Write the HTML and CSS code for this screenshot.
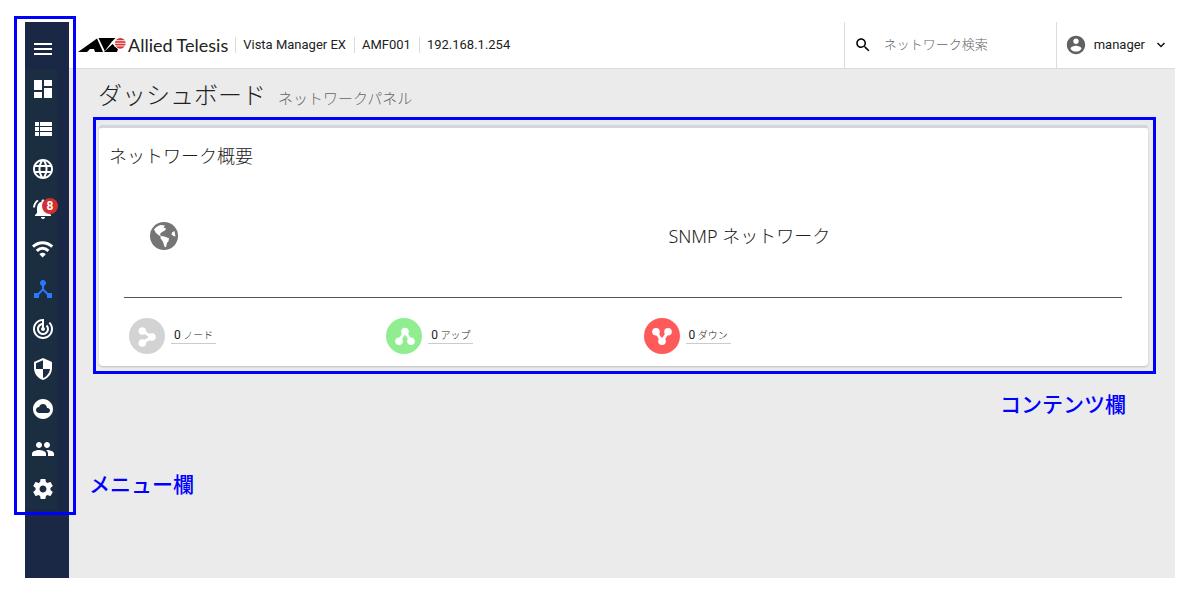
FILE: index.html
```html
<!DOCTYPE html>
<html lang="ja">
<head>
<meta charset="utf-8">
<title>Vista Manager EX</title>
<link rel="stylesheet" href="styles.css">
</head>
<body>
<div class="app">
  <nav class="sidebar" aria-label="メニュー">
    <div class="menu">
      <button class="menu-item" aria-label="メニュー"><svg class="icon" viewBox="0 0 24 24"><path d="M3 18h18v-2H3v2zm0-5h18v-2H3v2zm0-7v2h18V6H3z"/></svg></button>
      <div class="menu-links">
        <a class="menu-item" href="#" aria-label="ダッシュボード"><svg class="icon" viewBox="0 0 24 24"><path d="M3 13h8V3H3v10zm0 8h8v-6H3v6zm10 0h8V11h-8v10zm0-18v6h8V3h-8z"/></svg></a>
        <a class="menu-item" href="#" aria-label="リスト"><svg class="icon" viewBox="0 0 24 24"><path d="M4 14h4v-4H4v4zm0 5h4v-4H4v4zM4 9h4V5H4v4zm5 5h12v-4H9v4zm0 5h12v-4H9v4zM9 5v4h12V5H9z"/></svg></a>
        <a class="menu-item" href="#" aria-label="マップ"><svg class="icon" viewBox="0 0 24 24"><path d="M11.99 2C6.47 2 2 6.48 2 12s4.47 10 9.99 10C17.52 22 22 17.52 22 12S17.52 2 11.99 2zm6.93 6h-2.95c-.32-1.25-.78-2.45-1.38-3.56 1.84.63 3.37 1.91 4.33 3.56zM12 4.04c.83 1.2 1.48 2.53 1.91 3.96h-3.82c.43-1.43 1.08-2.76 1.91-3.96zM4.26 14C4.1 13.36 4 12.69 4 12s.1-1.36.26-2h3.38c-.08.66-.14 1.32-.14 2s.06 1.34.14 2H4.26zm.82 2h2.95c.32 1.25.78 2.45 1.38 3.56-1.84-.63-3.37-1.9-4.33-3.56zm2.95-8H5.08c.96-1.66 2.49-2.93 4.33-3.56C8.81 5.55 8.35 6.75 8.03 8zM12 19.96c-.83-1.2-1.48-2.53-1.91-3.96h3.82c-.43 1.43-1.08 2.76-1.91 3.96zM14.34 14H9.66c-.09-.66-.16-1.32-.16-2s.07-1.35.16-2h4.68c.09.65.16 1.32.16 2s-.07 1.34-.16 2zm.25 5.56c.6-1.11 1.06-2.31 1.38-3.56h2.95c-.96 1.65-2.49 2.93-4.33 3.56zM16.36 14c.08-.66.14-1.32.14-2s-.06-1.34-.14-2h3.38c.16.64.26 1.31.26 2s-.1 1.36-.26 2h-3.38z"/></svg></a>
        <a class="menu-item" href="#" aria-label="通知"><svg class="icon" viewBox="0 0 24 24"><path d="M7.58 4.08L6.15 2.65C3.75 4.48 2.17 7.3 2.03 10.5h2c.15-2.65 1.51-4.97 3.55-6.42zm12.39 6.42h2c-.15-3.2-1.73-6.02-4.12-7.85l-1.42 1.43c2.02 1.45 3.39 3.77 3.54 6.42zM18 11c0-3.07-1.64-5.64-4.5-6.32V4c0-.83-.67-1.5-1.5-1.5s-1.5.67-1.5 1.5v.68C7.63 5.36 6 7.92 6 11v5l-2 2v1h16v-1l-2-2v-5zm-6 11c.14 0 .27-.01.4-.04.65-.14 1.18-.58 1.44-1.18.1-.24.15-.5.15-.78h-4c.01 1.1.9 2 2.01 2z"/></svg><span class="badge">8</span></a>
        <a class="menu-item" href="#" aria-label="ワイヤレス"><svg class="icon" viewBox="0 0 24 24"><g fill="none" stroke="currentColor" stroke-width="3"><path d="M2 9.600C7.600 4.300 15.600 4.300 21.200 9.600"/><path d="M5.800 13.800C9.400 10.400 13.800 10.400 17.400 13.800"/></g><path d="M8.400 17.200Q11.600 14.400 14.800 17.200L11.600 20.500z"/></svg></a>
        <a class="menu-item active" href="#" aria-label="ネットワーク"><svg class="icon" viewBox="0 0 24 24"><path d="M17 16l-4-4V8.820C14.160 8.400 15 7.300 15 6c0-1.660-1.340-3-3-3S9 4.340 9 6c0 1.300.84 2.400 2 2.820V12l-4 4H3v5h5v-3.050l4-4.200 4 4.200V21h5v-5h-4z"/></svg></a>
        <a class="menu-item" href="#" aria-label="トラッキング"><svg class="icon" viewBox="0 0 24 24"><path d="M19.070 4.930l-1.410 1.410C19.100 7.790 20 9.790 20 12c0 4.420-3.580 8-8 8s-8-3.580-8-8c0-4.080 3.050-7.440 7-7.930v2.020C8.160 6.570 6 9.030 6 12c0 3.310 2.690 6 6 6s6-2.690 6-6c0-1.660-.67-3.160-1.760-4.240l-1.410 1.410C15.550 9.900 16 10.900 16 12c0 2.210-1.790 4-4 4s-4-1.790-4-4c0-1.860 1.280-3.410 3-3.860v2.140c-.6.350-1 .98-1 1.720 0 1.100.9 2 2 2s2-.9 2-2c0-.74-.4-1.380-1-1.720V2h-1C6.480 2 2 6.480 2 12s4.480 10 10 10 10-4.480 10-10c0-2.760-1.120-5.260-2.930-7.070z"/></svg></a>
        <a class="menu-item" href="#" aria-label="セキュリティ"><svg class="icon" viewBox="0 0 24 24"><path d="M12 1L3 5v6c0 5.550 3.840 10.740 9 12 5.160-1.260 9-6.450 9-12V5l-9-4zm0 10.990h7c-.53 4.120-3.280 7.790-7 8.940V12H5V6.300l7-3.110v8.800z"/></svg></a>
        <a class="menu-item" href="#" aria-label="クラウド"><svg class="icon" viewBox="0 0 24 24"><path d="M12 2C6.480 2 2 6.480 2 12s4.480 10 10 10 10-4.480 10-10S17.520 2 12 2zm4.500 14H8c-1.660 0-3-1.340-3-3s1.340-3 3-3l.14.010C8.580 8.280 10.130 7 12 7c2.210 0 4 1.790 4 4h.5c1.380 0 2.500 1.120 2.500 2.500S17.880 16 16.500 16z"/></svg></a>
        <a class="menu-item" href="#" aria-label="ユーザー"><svg class="icon" viewBox="0 0 24 24"><path d="M16 11c1.660 0 2.990-1.340 2.990-3S17.660 5 16 5c-1.660 0-3 1.340-3 3s1.340 3 3 3zm-8 0c1.660 0 2.990-1.340 2.990-3S9.660 5 8 5C6.340 5 5 6.340 5 8s1.340 3 3 3zm0 2c-2.330 0-7 1.170-7 3.500V19h14v-2.500c0-2.330-4.670-3.500-7-3.500zm8 0c-.29 0-.62.020-.97.050 1.160.84 1.970 1.970 1.970 3.450V19h6v-2.500c0-2.330-4.670-3.500-7-3.500z"/></svg></a>
        <a class="menu-item" href="#" aria-label="設定"><svg class="icon" viewBox="0 0 24 24"><path d="M19.43 12.98c.04-.32.07-.64.07-.98s-.03-.66-.07-.98l2.11-1.65c.19-.15.24-.42.12-.64l-2-3.46c-.12-.22-.39-.3-.61-.22l-2.49 1c-.52-.4-1.08-.73-1.69-.98l-.38-2.65C14.46 2.18 14.25 2 14 2h-4c-.25 0-.46.18-.49.42l-.38 2.65c-.61.25-1.17.59-1.69.98l-2.49-1c-.23-.09-.49 0-.61.22l-2 3.46c-.13.22-.07.49.12.64l2.11 1.65c-.04.32-.07.65-.07.98s.03.66.07.98l-2.11 1.65c-.19.15-.24.42-.12.64l2 3.46c.12.22.39.3.61.22l2.49-1c.52.4 1.08.73 1.69.98l.38 2.65c.03.24.24.42.49.42h4c.25 0 .46-.18.49-.42l.38-2.65c.61-.25 1.17-.59 1.69-.98l2.49 1c.23.09.49 0 .61-.22l2-3.46c.12-.22.07-.49-.12-.64l-2.11-1.65zM12 15.5c-1.93 0-3.5-1.57-3.5-3.5s1.57-3.5 3.5-3.5 3.5 1.57 3.5 3.5-1.57 3.5-3.5 3.5z"/></svg></a>
      </div>
      <div class="menu-frame"></div>
    </div>
  </nav>
  <div class="main">
    <header class="topbar">
      <div class="brand">
        <svg class="mark" viewBox="0 0 48 16"><path d="M0 15L19 1.500 25 15h-8l-1-3h-4L9 15zM20.500 1H37.500L34 4.500 26.800 14zM26 15L34.500 7 40 12 39 15z"/><circle cx="42.300" cy="6.300" r="6" fill="#fff"/><circle cx="42.300" cy="6.300" r="5.400" fill="#d5342f"/><path d="M36 3.700h12M36 6.300h12M36 8.900h12" stroke="#fff" stroke-width=".9"/></svg>
        <span class="wordmark">Allied Telesis</span>
      </div>
      <span class="crumb">Vista Manager EX</span>
      <span class="crumb">AMF001</span>
      <span class="crumb">192.168.1.254</span>
      <label class="search">
        <svg class="search-icon" viewBox="0 0 24 24"><path d="M15.500 14h-.79l-.28-.27C15.410 12.590 16 11.110 16 9.500 16 5.910 13.090 3 9.500 3S3 5.910 3 9.500 5.910 16 9.500 16c1.610 0 3.090-.59 4.230-1.570l.27.28v.79l5 4.990L20.490 19l-4.990-5zm-6 0C7.010 14 5 11.990 5 9.500S7.010 5 9.500 5 14 7.010 14 9.500 11.990 14 9.500 14z"/></svg>
        <input type="search" placeholder="ネットワーク検索" aria-label="ネットワーク検索">
      </label>
      <button class="user">
        <svg class="avatar" viewBox="0 0 24 24"><path d="M12 2C6.480 2 2 6.480 2 12s4.480 10 10 10 10-4.480 10-10S17.520 2 12 2zm0 3c1.660 0 3 1.340 3 3s-1.340 3-3 3-3-1.340-3-3 1.340-3 3-3zm0 14.200c-2.500 0-4.710-1.280-6-3.220.03-1.990 4-3.080 6-3.080 1.990 0 5.970 1.090 6 3.080-1.290 1.940-3.500 3.220-6 3.220z"/></svg>
        <span>manager</span>
        <svg class="chevron" viewBox="0 0 10 10"><path d="M1.500 3l3.500 3.500L8.500 3" fill="none" stroke="#111" stroke-width="1.500"/></svg>
      </button>
    </header>
    <main>
      <div class="heading">
        <h1>ダッシュボード</h1>
        <span class="subtitle">ネットワークパネル</span>
      </div>
      <div class="content-frame">
        <section class="card">
          <h2>ネットワーク概要</h2>
          <div class="network">
            <svg class="globe" viewBox="0 0 28 28"><circle cx="14" cy="14" r="14" fill="#757575"/><path fill="#fff" d="M4 7.500Q7 3.500 11 3l4 .500-1.500 2 2.500 1-1 2-3 1.500-2 2 1 2-2-.500-3-2.500zM10.500 14l3 .3 5.500 2-.500 3-1.500 1.500-1 4.500-1.500-.500-1.500-5-2.500-3.500zM22 10.500l2.500-1.500 1 5.500-2-.500-2-1.500z"/></svg>
            <h3>SNMP ネットワーク</h3>
          </div>
          <div class="stats">
            <div class="stat">
              <svg class="stat-icon" viewBox="0 0 36 36"><circle cx="18" cy="18" r="18" fill="#d3d3d3"/><g fill="#fff"><path d="M13.300 13L22.700 19 13.300 25" fill="none" stroke="#fff" stroke-width="3"/><circle cx="13.300" cy="13" r="3.800"/><circle cx="23" cy="19" r="3.800"/><circle cx="13.300" cy="25" r="3.800"/></g></svg>
              <a href="#"><span class="count">0</span> ノード</a>
            </div>
            <div class="stat">
              <svg class="stat-icon" viewBox="0 0 36 36"><circle cx="18" cy="18" r="18" fill="#90ee90"/><g fill="#fff"><path d="M13 23.300L19 13.500 25 23.300" fill="none" stroke="#fff" stroke-width="3"/><circle cx="13" cy="23.300" r="3.800"/><circle cx="19" cy="13.500" r="3.800"/><circle cx="25" cy="23.300" r="3.800"/></g></svg>
              <a href="#"><span class="count">0</span> アップ</a>
            </div>
            <div class="stat">
              <svg class="stat-icon" viewBox="0 0 36 36"><circle cx="18" cy="18" r="18" fill="#ff5a5a"/><g fill="#fff"><path d="M12 13.700L18 23.300 24 13.700" fill="none" stroke="#fff" stroke-width="3"/><circle cx="12" cy="13.700" r="3.800"/><circle cx="18" cy="23.300" r="3.800"/><circle cx="24" cy="13.700" r="3.800"/></g></svg>
              <a href="#"><span class="count">0</span> ダウン</a>
            </div>
          </div>
        </section>
      </div>
      <p class="note note-content">コンテンツ欄</p>
      <p class="note note-menu">メニュー欄</p>
    </main>
  </div>
</div>
</body>
</html>
```
FILE: styles.css
```css
* { box-sizing: border-box; }

body {
  margin: 0;
  padding: 22px 25px;
  background: #fff;
  color: #212121;
  font: 13px/20px Roboto, "Noto Sans CJK JP", sans-serif;
}

h1, h2, h3, p { margin: 0; }
a { color: inherit; text-decoration: none; }
button, input { font: inherit; color: inherit; border: 0; background: none; padding: 0; }

.app {
  display: flex;
  min-height: calc(100vh - 44px);
}

.sidebar {
  flex: none;
  width: 44px;
  background: #1a2846;
}

.menu {
  position: relative;
  padding-top: 7px;
  color: #fff;
}

.menu-links {
  background: linear-gradient(to right, #1a2d41 32px, transparent 32px);
}

.menu-item {
  position: relative;
  display: flex;
  align-items: center;
  justify-content: center;
  width: 36px;
  height: 40px;
}

.menu-item.active { color: #2979ff; }

.icon {
  width: 24px;
  height: 24px;
  fill: currentColor;
}

.badge {
  position: absolute;
  top: 9px;
  right: 3px;
  width: 16px;
  height: 16px;
  border-radius: 50%;
  background: #d32f2f;
  font-size: 12px;
  font-weight: 700;
  line-height: 16px;
  text-align: center;
}

.menu-frame {
  position: absolute;
  inset: -6px -7px -6px -11px;
  border: 3px solid #00f;
  pointer-events: none;
}

.main {
  flex: 1;
  min-width: 0;
  background: #ebebeb;
}

.topbar {
  display: flex;
  align-items: center;
  height: 47px;
  padding-left: 9px;
  background: #fff;
  border-bottom: 1px solid #dcdcdc;
}

.brand {
  display: flex;
  align-items: center;
  gap: 2px;
  margin-right: 7px;
}

.mark { width: 48px; height: 16px; }

.wordmark {
  color: #222;
  font: 400 18px/20px Lato, sans-serif;
}

.crumb {
  padding: 0 8px 0 7px;
  border-left: 1px solid #dcdcdc;
  line-height: 16px;
}

.search {
  display: flex;
  align-items: center;
  align-self: stretch;
  gap: 12px;
  width: 212px;
  margin-left: auto;
  padding-left: 9px;
  border-left: 1px solid #dcdcdc;
}

.search-icon { flex: none; width: 18px; height: 18px; }

.search input {
  flex: 1;
  min-width: 0;
  outline: 0;
  font-weight: 300;
}

.search input::placeholder { color: #666; }

.user {
  display: flex;
  align-items: center;
  align-self: stretch;
  padding: 0 9px 0 8px;
  border-left: 1px solid #dcdcdc;
}

.avatar { width: 22px; height: 22px; margin-right: 7px; fill: #616161; }
.chevron { width: 10px; height: 10px; margin-left: 11px; }

.heading {
  display: flex;
  align-items: baseline;
  gap: 12px;
  padding: 11px 29px 2px;
  line-height: 32px;
}

h1 { font-size: 24px; font-weight: 300; }
.subtitle { color: #666; font-size: 15px; font-weight: 300; }

.content-frame {
  margin: 0 19px 0 24px;
  padding: 5px;
  padding-left: 3px;
  border: 3px solid #00f;
}

.card {
  padding-bottom: 12px;
  border-top: 3px solid #d2d5e0;
  border-radius: 4px;
  background: #fff;
  box-shadow: 0 1px 2px rgba(0, 0, 0, .2);
}

h2 {
  padding: 17px 10px 15px;
  font-size: 18px;
  font-weight: 300;
  line-height: 24px;
}

.network {
  display: grid;
  grid-template-columns: 8fr 7fr;
  align-items: center;
  height: 114px;
  margin: 0 26px 20px 25px;
  padding: 0 0 10px 26px;
  border-bottom: 1px solid #555;
}

.globe { width: 28px; height: 28px; }

h3 { font: 300 18px/24px "Noto Sans", "Noto Sans CJK JP", sans-serif; }

.stats {
  display: grid;
  grid-template-columns: repeat(4, 1fr);
  margin-left: 20px;
}

.stat {
  display: flex;
  align-items: center;
  gap: 6px;
  padding-left: 10px;
}

.stat-icon { width: 36px; height: 36px; }

.stat a {
  padding: 0 3px;
  border-bottom: 1px solid #ccc;
  font-size: 10px;
  font-weight: 300;
  line-height: 15px;
}

.count { font-size: 12px; font-weight: 400; }

.note {
  color: #00f;
  font-size: 21px;
  font-weight: 500;
  line-height: 30px;
}

.note-content { padding: 16px 49px 0; text-align: right; }
.note-menu { padding: 50px 20px 0; }
```
